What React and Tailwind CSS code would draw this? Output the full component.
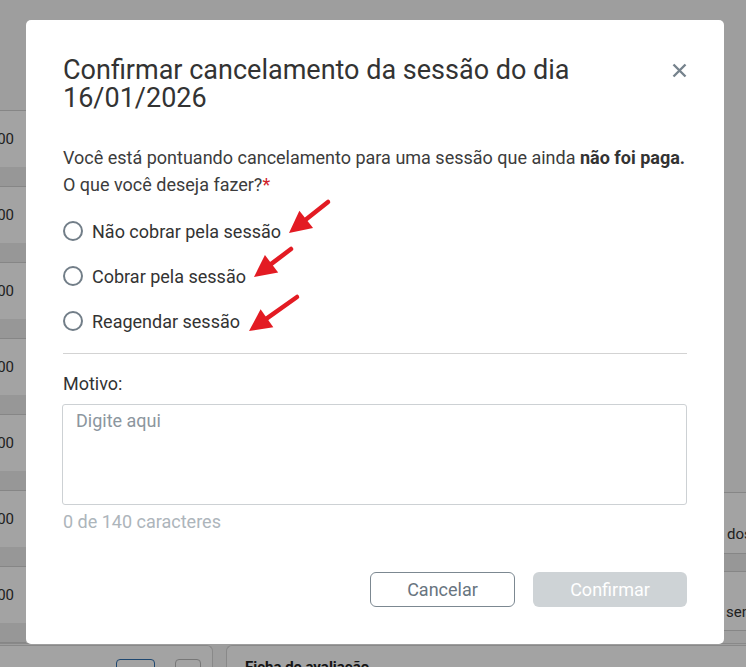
import React from "react";

function Arrow({ tail, tip }) {
  const dx = tip[0] - tail[0];
  const dy = tip[1] - tail[1];
  const len = Math.hypot(dx, dy);
  const ux = dx / len;
  const uy = dy / len;
  const px = -uy;
  const py = ux;
  const L = 22;
  const W = 11;
  const bx = tip[0] - ux * L;
  const by = tip[1] - uy * L;
  const pts = [
    [tip[0], tip[1]],
    [bx + px * W, by + py * W],
    [bx - px * W, by - py * W],
  ]
    .map((p) => p.join(","))
    .join(" ");
  return (
    <g>
      <line x1={tail[0]} y1={tail[1]} x2={bx + ux * 4} y2={by + uy * 4} stroke="#e31b23" strokeWidth="4.5" strokeLinecap="round" />
      <polygon points={pts} fill="#e31b23" />
    </g>
  );
}

function LeftRow({ last }) {
  return (
    <div className="flex flex-col">
      <div className="h-[56px] bg-white flex items-center justify-end pr-[12px] whitespace-nowrap text-[15px] text-[#333]">
        R$ 150,00
      </div>
      {!last && <div className="h-[20px] bg-[#ececec] border-b border-[#d2d2d2]" />}
    </div>
  );
}

function Radio({ label }) {
  return (
    <label className="flex items-center gap-[9px] h-[24px]">
      <span className="w-[20px] h-[20px] rounded-full border-2 border-[#727e88] bg-white" />
      <span className="text-[18px] text-[#333]">{label}</span>
    </label>
  );
}

export default function App() {
  return (
    <div className="relative w-[746px] h-[667px] overflow-hidden bg-[#f7f7f7]" style={{ fontFamily: "Roboto, 'Liberation Sans', sans-serif" }}>
      {/* underlying page */}
      <div className="flex flex-col h-full">
        <div className="flex h-[650px] border-b border-[#d6d6d6]">
          <div className="w-[26px] flex flex-col overflow-hidden">
            <div className="h-[111px] border-b border-[#d2d2d2]" />
            <LeftRow />
            <LeftRow />
            <LeftRow />
            <LeftRow />
            <LeftRow />
            <LeftRow />
            <LeftRow />
          </div>
          <div className="flex-1" />
          <div className="w-[40px] flex flex-col overflow-hidden">
            <div className="h-[493px] border-b border-[#d2d2d2]" />
            <div className="h-[60px] bg-white pl-[21px] pt-[31px] leading-[20px] whitespace-nowrap text-[15px] text-[#333]">dos</div>
            <div className="h-[19px] bg-[#ececec] border-y border-[#d2d2d2]" />
            <div className="h-[59px] bg-white pl-[20px] pt-[30px] leading-[20px] whitespace-nowrap text-[15px] text-[#333] border-b border-[#d2d2d2]">sen</div>
          </div>
        </div>
        <div className="flex gap-[13px] pt-[1px] flex-1">
          <div className="w-[213px] bg-white rounded-tr-[6px] border-t border-r border-[#d6d6d6] flex gap-[20px] pl-[116px] pt-[13px]">
            <div className="w-[39px] h-[20px] rounded-[4px] border border-[#2f6fb0]" />
            <div className="w-[26px] h-[20px] rounded-[4px] border border-[#bbb]" />
          </div>
          <div className="flex-1 bg-white rounded-tl-[6px] border-t border-l border-[#d6d6d6] pl-[18px] pt-[10px] text-[15px] font-bold text-[#222]">
            Ficha de avaliação
          </div>
        </div>
      </div>

      {/* overlay */}
      <div className="absolute inset-0 bg-black/[0.36] flex justify-center items-start pt-[20px] pl-[4px]">
        <div className="relative w-[698px] h-[624px] bg-white rounded-[5px] px-[37px] pt-[36px] flex flex-col">
          <div className="flex items-start justify-between">
            <h2 className="text-[27px] leading-[28px] text-[#333] w-[560px]">
              Confirmar cancelamento da sessão do dia 16/01/2026
            </h2>
            <button className="mt-[6px] w-[16px] h-[16px] flex items-center justify-center">
              <svg width="15" height="15" viewBox="0 0 15 15">
                <path d="M1.5 1.5 L13.5 13.5 M13.5 1.5 L1.5 13.5" stroke="#76838d" strokeWidth="2.4" strokeLinecap="butt" />
              </svg>
            </button>
          </div>

          <p className="mt-[32px] text-[18px] leading-[27px] text-[#3c3c3c] whitespace-nowrap">
            Você está pontuando cancelamento para uma sessão que ainda <b className="font-bold text-[#333]">não foi paga.</b>
            <br />
            O que você deseja fazer?<span className="text-[#d0202a]">*</span>
          </p>

          <div className="mt-[21px] flex flex-col gap-[21px]">
            <Radio label="Não cobrar pela sessão" />
            <Radio label="Cobrar pela sessão" />
            <Radio label="Reagendar sessão" />
          </div>

          <div className="mt-[20px] h-px bg-[#d3d3d3]" />

          <div className="mt-[20px] text-[18px] leading-[20px] text-[#333]">Motivo:</div>
          <div className="-ml-px mt-[10px] h-[101px] border border-[#cdd1d4] rounded-[3px] px-[13px] pt-[6px] text-[18px] leading-[20px] text-[#8c969e]">
            Digite aqui
          </div>
          <div className="mt-[7px] text-[18px] leading-[20px] text-[#adb5bb]">0 de 140 caracteres</div>

          <div className="mt-[40px] flex justify-end gap-[18px]">
            <button className="w-[145px] h-[35px] rounded-[6px] border border-[#7c8891] text-[18px] text-[#687580]">Cancelar</button>
            <button className="w-[154px] h-[35px] rounded-[6px] bg-[#ced3d6] text-[18px] text-white">Confirmar</button>
          </div>

          <svg className="absolute left-0 top-0 pointer-events-none" width="698" height="624">
            <Arrow tail={[302, 182]} tip={[263, 213]} />
            <Arrow tail={[265, 229]} tip={[228, 257]} />
            <Arrow tail={[271, 277]} tip={[223, 311]} />
          </svg>
        </div>
      </div>
    </div>
  );
}
